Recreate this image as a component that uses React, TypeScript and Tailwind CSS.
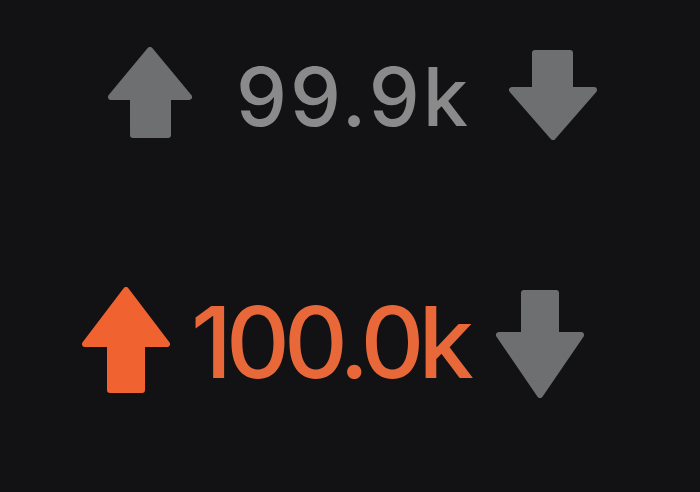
export default function App() {
  return (
    <div className="w-[700px] h-[492px] bg-[#121214] flex flex-col overflow-hidden" style={{ fontFamily: "Inter, 'Liberation Sans', sans-serif" }}>
      <div className="flex items-start pl-[108px] pt-[47px]">
        <svg width="84" height="91" viewBox="0 0 84 91">
          <polygon points="42,3 81,50 60,50 60,88 25,88 25,50 3,50" fill="#6e6f71" stroke="#6e6f71" strokeWidth="6" strokeLinejoin="round" />
        </svg>
        <span className="ml-[44px] mt-[10px] text-[81px] leading-none font-medium tracking-[3px] text-[#8a8a8b]">99.9k</span>
        <svg className="ml-[38px] mt-[3px]" width="88" height="90" viewBox="0 0 88 90">
          <polygon points="26,3 61,3 61,40 85,40 44,87 3,40 26,40" fill="#6e6f71" stroke="#6e6f71" strokeWidth="6" strokeLinejoin="round" />
        </svg>
      </div>
      <div className="flex items-start pl-[82px] mt-[147px]">
        <svg width="88" height="106" viewBox="0 0 88 106">
          <polygon points="44,3 85,57 60,57 60,103 28,103 28,57 3,57" fill="#f0622f" stroke="#f0622f" strokeWidth="6" strokeLinejoin="round" />
        </svg>
        <span className="ml-[21px] mt-[6px] text-[99px] leading-none font-medium tracking-[-6px] text-[#e8683a]">100.0k</span>
        <svg className="ml-[28px] mt-[3px]" width="88" height="108" viewBox="0 0 88 108">
          <polygon points="28,3 60,3 60,45 85,45 44,105 3,45 28,45" fill="#6e6f71" stroke="#6e6f71" strokeWidth="6" strokeLinejoin="round" />
        </svg>
      </div>
    </div>
  );
}
